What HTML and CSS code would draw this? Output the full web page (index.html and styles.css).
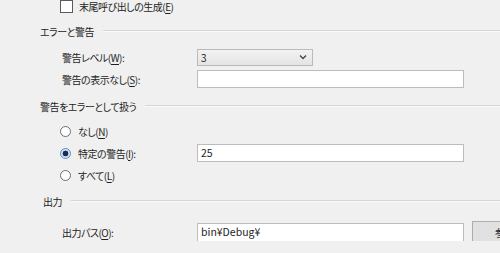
FILE: index.html
```html
<!DOCTYPE html>
<html>
<head>
    <title>ビルド設定</title>
    <link rel="stylesheet" href="styles.css">
</head>
<body>
<div class="panel">

    <div class="check-row">
        <span class="checkbox"></span>
        <span>末尾呼び出しの生成(<u>E</u>)</span>
    </div>

    <div class="group-head head-errors">
        <span>エラーと警告</span>
        <span class="rule"></span>
    </div>

    <div class="field row-level">
        <label>警告レベル(<u>W</u>):</label>
        <div class="select">
            <span>3</span>
            <svg width="8" height="6" viewBox="0 0 8 6"><path d="M1 1.5 L4 4.5 L7 1.5" fill="none" stroke="#444" stroke-width="1.3"/></svg>
        </div>
    </div>

    <div class="field row-suppress">
        <label>警告の表示なし(<u>S</u>):</label>
        <div class="textbox"></div>
    </div>

    <div class="group-head head-treat">
        <span>警告をエラーとして扱う</span>
        <span class="rule"></span>
    </div>

    <div class="radio-row row-none">
        <span class="radio"></span>
        <span>なし(<u>N</u>)</span>
    </div>

    <div class="field radio-field row-specific">
        <label><span class="radio checked"></span>特定の警告(<u>I</u>):</label>
        <div class="textbox">25</div>
    </div>

    <div class="radio-row row-all">
        <span class="radio"></span>
        <span>すべて(<u>L</u>)</span>
    </div>

    <div class="group-head head-output">
        <span>出力</span>
        <span class="rule"></span>
    </div>

    <div class="field row-output">
        <label>出力パス(<u>O</u>):</label>
        <div class="textbox">bin¥Debug¥</div>
        <button class="browse">参照(<u>R</u>)...</button>
    </div>

</div>
</body>
</html>
```

FILE: styles.css
```css
html, body {
    margin: 0;
    height: 100%;
    overflow: hidden;
}
body {
    background-color: #f0f0f0;
    font-family: "Noto Sans CJK JP", "Noto Sans", sans-serif;
    font-size: 10px;
    font-feature-settings: "palt";
    letter-spacing: -0.5px;
    color: #1e1e1e;
}
u {
    text-decoration-thickness: 1px;
    text-underline-offset: 2px;
}
.panel {
    overflow: hidden;
}

/* checkbox */
.check-row {
    display: flex;
    align-items: center;
    height: 12px;
    padding-left: 60px;
    gap: 6px;
}
.checkbox {
    width: 11px;
    height: 11px;
    border: 1px solid #5a5a5a;
    background: #fff;
}

/* group headers with a rule */
.group-head {
    display: flex;
    align-items: center;
    height: 14px;
    gap: 9px;
    padding-left: 40px;
}
.group-head .rule {
    flex: 1;
    border-top: 1px solid #d6d6d6;
    border-bottom: 1px solid #fafafa;
}
.head-errors { margin-top: 12px; }
.head-treat { margin-top: 11px; }
.head-output { margin-top: 10px; padding-left: 43px; }

/* label + control rows */
.field {
    display: grid;
    grid-template-columns: 135px 267px 8px 60px;
    align-items: center;
    height: 18px;
    padding-left: 62px;
}
.field label {
    display: flex;
    align-items: center;
}
.row-level { margin-top: 10px; }
.row-suppress { margin-top: 4px; }
.radio-field { padding-left: 60px; grid-template-columns: 137px 267px; }
.row-specific { margin-top: 4px; }
.row-output { margin-top: 13px; height: 20px; }

.select {
    grid-column: 2;
    width: 116px;
    height: 17px;
    display: flex;
    align-items: center;
    justify-content: space-between;
    padding: 0 5px 0 3px;
    box-sizing: border-box;
    border: 1px solid #bababa;
    background: linear-gradient(#f2f2f2, #e4e4e4);
}
.textbox {
    grid-column: 2;
    height: 18px;
    box-sizing: border-box;
    border: 1px solid #bcbcbc;
    background: #fff;
    padding: 0 3px;
    line-height: 16px;
    letter-spacing: 0;
    font-size: 10.5px;
}
.row-output .textbox { height: 19px; }
.browse {
    grid-column: 4;
    height: 23px;
    border: 1px solid #adadad;
    background: #e1e1e1;
    font: inherit;
    color: #1e1e1e;
    text-align: left;
    padding: 0 0 0 22px;
    white-space: nowrap;
}

/* radio buttons */
.radio-row {
    display: flex;
    align-items: center;
    height: 18px;
    padding-left: 60px;
}
.row-none { margin-top: 9px; }
.row-all { margin-top: 4px; }
.radio {
    width: 11px;
    height: 11px;
    border: 1px solid #6e6e6e;
    border-radius: 50%;
    background: #fff;
    margin-right: 7px;
    box-sizing: border-box;
    flex: none;
}
.radio.checked {
    border-color: #5b8ec6;
    background: radial-gradient(circle, #1c2c4f 0 2.6px, #cfe3f7 3.2px);
}
```
